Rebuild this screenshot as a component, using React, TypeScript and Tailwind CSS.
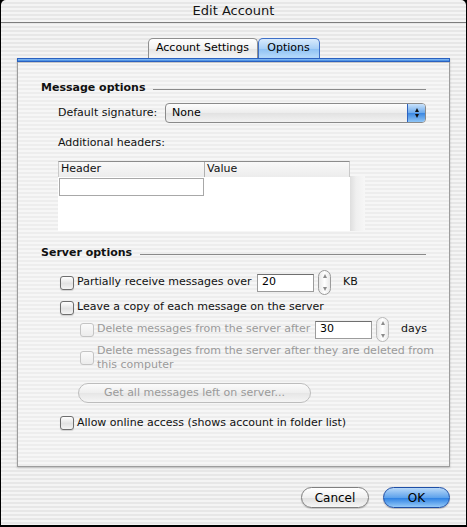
import React from 'react';

const font = { fontFamily: '"DejaVu Sans", "Liberation Sans", sans-serif' };

function Checkbox({ disabled = false }: { disabled?: boolean }) {
  return (
    <span
      className={
        disabled
          ? 'inline-block w-[14px] h-[14px] shrink-0 rounded-[3px] border border-[#c4c4c4] bg-[linear-gradient(180deg,#fafafa,#ececec)]'
          : 'inline-block w-[14px] h-[14px] shrink-0 rounded-[3px] border border-[#6e6e6e] bg-[linear-gradient(180deg,#ffffff,#e2e2e2_55%,#f4f4f4)] shadow-[0_1px_1px_rgba(0,0,0,0.15)]'
      }
    />
  );
}

function Stepper({ disabled = false }: { disabled?: boolean }) {
  return (
    <span
      className={`flex flex-col items-center justify-between w-[13px] h-[25px] rounded-full border ${
        disabled ? 'border-[#b9b9b9]' : 'border-[#9a9a9a]'
      } bg-[linear-gradient(90deg,#e8e8e8,#ffffff_50%,#e8e8e8)] py-[3px]`}
    >
      <span className="w-0 h-0 border-x-[2.5px] border-x-transparent border-b-[4px] border-b-[#8c8c8c]" />
      <span className="w-0 h-0 border-x-[2.5px] border-x-transparent border-t-[4px] border-t-[#8c8c8c]" />
    </span>
  );
}

function NumField({ value }: { value: string }) {
  return (
    <span className="flex items-center w-[57px] h-[18px] bg-white border border-[#9c9c9c] border-t-[#6f6f6f] pl-[4px] text-[11px] text-black">
      {value}
    </span>
  );
}

function SectionTitle({ children }: { children: React.ReactNode }) {
  return (
    <div className="flex items-center gap-[8px] pl-[23px] pr-[23px] h-[16px]">
      <span className="font-bold text-[11px] text-[#111]">{children}</span>
      <span className="flex-1 h-px bg-[#8a8a8a] mt-[3px]" />
    </div>
  );
}

export default function App() {
  return (
    <div className="w-[467px] h-[527px] bg-black" style={font}>
      <div className="mx-[1px] h-[525px] rounded-t-[5px] overflow-hidden flex flex-col bg-[repeating-linear-gradient(180deg,#f4f4f4_0px,#f4f4f4_2px,#e7e7e7_2px,#e7e7e7_4px)]">
        <div className="h-[23px] shrink-0 flex items-center justify-center border-b border-[#7d7d7d] text-[13px] text-[#151515]">
          Edit Account
        </div>

        <div className="flex justify-center mt-[15px] h-[20px] shrink-0">
          <div className="flex items-center justify-center w-[110px] rounded-t-[5px] border border-b-0 border-[#8f8f8f] bg-[linear-gradient(180deg,#ffffff,#f1f1f1_50%,#e4e4e4_52%,#f6f6f6)] text-[11px] text-black">
            Account Settings
          </div>
          <div className="flex items-center justify-center w-[62px] rounded-t-[5px] border border-b-0 border-[#3f6fc6] bg-[linear-gradient(180deg,#d9ebfc,#a9d0f6_50%,#8ec1f3_52%,#b7dbfb)] text-[11px] text-black">
            Options
          </div>
        </div>

        <div className="mx-[16px] h-[409px] shrink-0 flex flex-col border-x border-b border-[#9d9d9d] shadow-[0_1px_2px_rgba(0,0,0,0.2)] bg-[repeating-linear-gradient(180deg,#f6f6f6_0px,#f6f6f6_2px,#ededed_2px,#ededed_4px)]">
          <div className="h-[4px] shrink-0 -mx-px border border-[#2a61c0] bg-[linear-gradient(180deg,#8fc1f3,#3d86e0)]" />
          <div className="h-px bg-[#c7c7c7]" />

          <div className="mt-[17px]">
            <SectionTitle>Message options</SectionTitle>
          </div>

          <div className="flex items-center pl-[40px] pr-[23px] mt-[7px] h-[20px] text-[11px] text-[#111]">
            <span className="w-[107px]">Default signature:</span>
            <div className="flex-1 flex h-[20px] rounded-[4px] border border-[#8a8a8a] bg-[linear-gradient(180deg,#fdfdfd,#ececec_50%,#e2e2e2_52%,#f2f2f2)] overflow-hidden">
              <span className="flex-1 flex items-center pl-[6px] text-[11px] text-black">None</span>
              <span className="flex flex-col items-center justify-center gap-[2px] w-[18px] border-l border-[#2d62bf] bg-[linear-gradient(180deg,#c9e2fb,#6aa8ec_50%,#3c88e2_52%,#8fc5f6)]">
                <span className="w-0 h-0 border-x-[2.5px] border-x-transparent border-b-[4px] border-b-[#111]" />
                <span className="w-0 h-0 border-x-[2.5px] border-x-transparent border-t-[4px] border-t-[#111]" />
              </span>
            </div>
          </div>

          <div className="pl-[40px] mt-[12px] h-[16px] flex items-center text-[11px] text-[#111]">
            Additional headers:
          </div>

          <div className="ml-[40px] mt-[10px] flex">
            <div className="w-[292px]">
              <div className="flex h-[16px] border-t border-[#8c8c8c] border-x border-x-[#c9c9c9] bg-[linear-gradient(180deg,#f9f9f9,#ececec)] text-[11px] text-[#111]">
                <span className="w-[146px] border-r border-[#b0b0b0] pl-[2px] flex items-center">Header</span>
                <span className="flex-1 pl-[2px] flex items-center">Value</span>
              </div>
              <div className="h-[54px] bg-white pt-[1px] pl-[1px]">
                <div className="w-[145px] h-[18px] border border-[#a8a8a8] bg-white" />
              </div>
            </div>
            <div className="w-[15px] mt-[15px] h-[55px] bg-[linear-gradient(90deg,#dedede,#efefef_40%,#f7f7f7)]" />
          </div>

          <div className="mt-[14px]">
            <SectionTitle>Server options</SectionTitle>
          </div>

          <div className="flex items-center pl-[42px] mt-[9px] h-[25px] text-[11px] text-[#111]">
            <Checkbox />
            <span className="ml-[3px] w-[180px]">Partially receive messages over</span>
            <NumField value="20" />
            <span className="ml-[4px]">
              <Stepper />
            </span>
            <span className="ml-[12px]">KB</span>
          </div>

          <div className="flex items-center pl-[42px] h-[25px] text-[11px] text-[#111]">
            <Checkbox />
            <span className="ml-[3px]">Leave a copy of each message on the server</span>
          </div>

          <div className="flex items-center pl-[62px] mt-[-3px] h-[25px] text-[11px] text-[#9a9a9a]">
            <Checkbox disabled />
            <span className="ml-[3px] w-[218px]">Delete messages from the server after</span>
            <NumField value="30" />
            <span className="ml-[4px]">
              <Stepper disabled />
            </span>
            <span className="ml-[12px] text-[#111]">days</span>
          </div>

          <div className="flex items-center pl-[62px] mt-[2px] text-[11px] leading-[14px] text-[#9a9a9a]">
            <Checkbox disabled />
            <span className="ml-[3px] whitespace-nowrap">
              Delete messages from the server after they are deleted from
              <br />
              this computer
            </span>
          </div>

          <div className="pl-[60px] mt-[11px]">
            <div className="flex items-center justify-center w-[233px] h-[20px] rounded-full border border-[#bdbdbd] bg-[linear-gradient(180deg,#fbfbfb,#eeeeee_50%,#e6e6e6_52%,#f5f5f5)] text-[11px] text-[#9a9a9a]">
              Get all messages left on server...
            </div>
          </div>

          <div className="flex items-center pl-[42px] mt-[12px] h-[16px] text-[11px] text-[#111]">
            <Checkbox />
            <span className="ml-[3px]">Allow online access (shows account in folder list)</span>
          </div>
        </div>

        <div className="flex justify-end gap-[14px] pr-[16px] mt-[20px]">
          <div className="flex items-center justify-center w-[68px] h-[21px] rounded-full border border-[#7f7f7f] bg-[linear-gradient(180deg,#ffffff,#f0f0f0_50%,#dedede_52%,#f7f7f7)] shadow-[0_1px_1px_rgba(0,0,0,0.2)] text-[12px] text-black">
            Cancel
          </div>
          <div className="flex items-center justify-center w-[67px] h-[21px] rounded-full border border-[#1f4fa6] bg-[linear-gradient(180deg,#b8d8f8,#5fa3ec_50%,#2b7fe2_52%,#94c9f8)] shadow-[0_1px_1px_rgba(0,0,0,0.25)] text-[12px] text-black">
            OK
          </div>
        </div>
      </div>
    </div>
  );
}
